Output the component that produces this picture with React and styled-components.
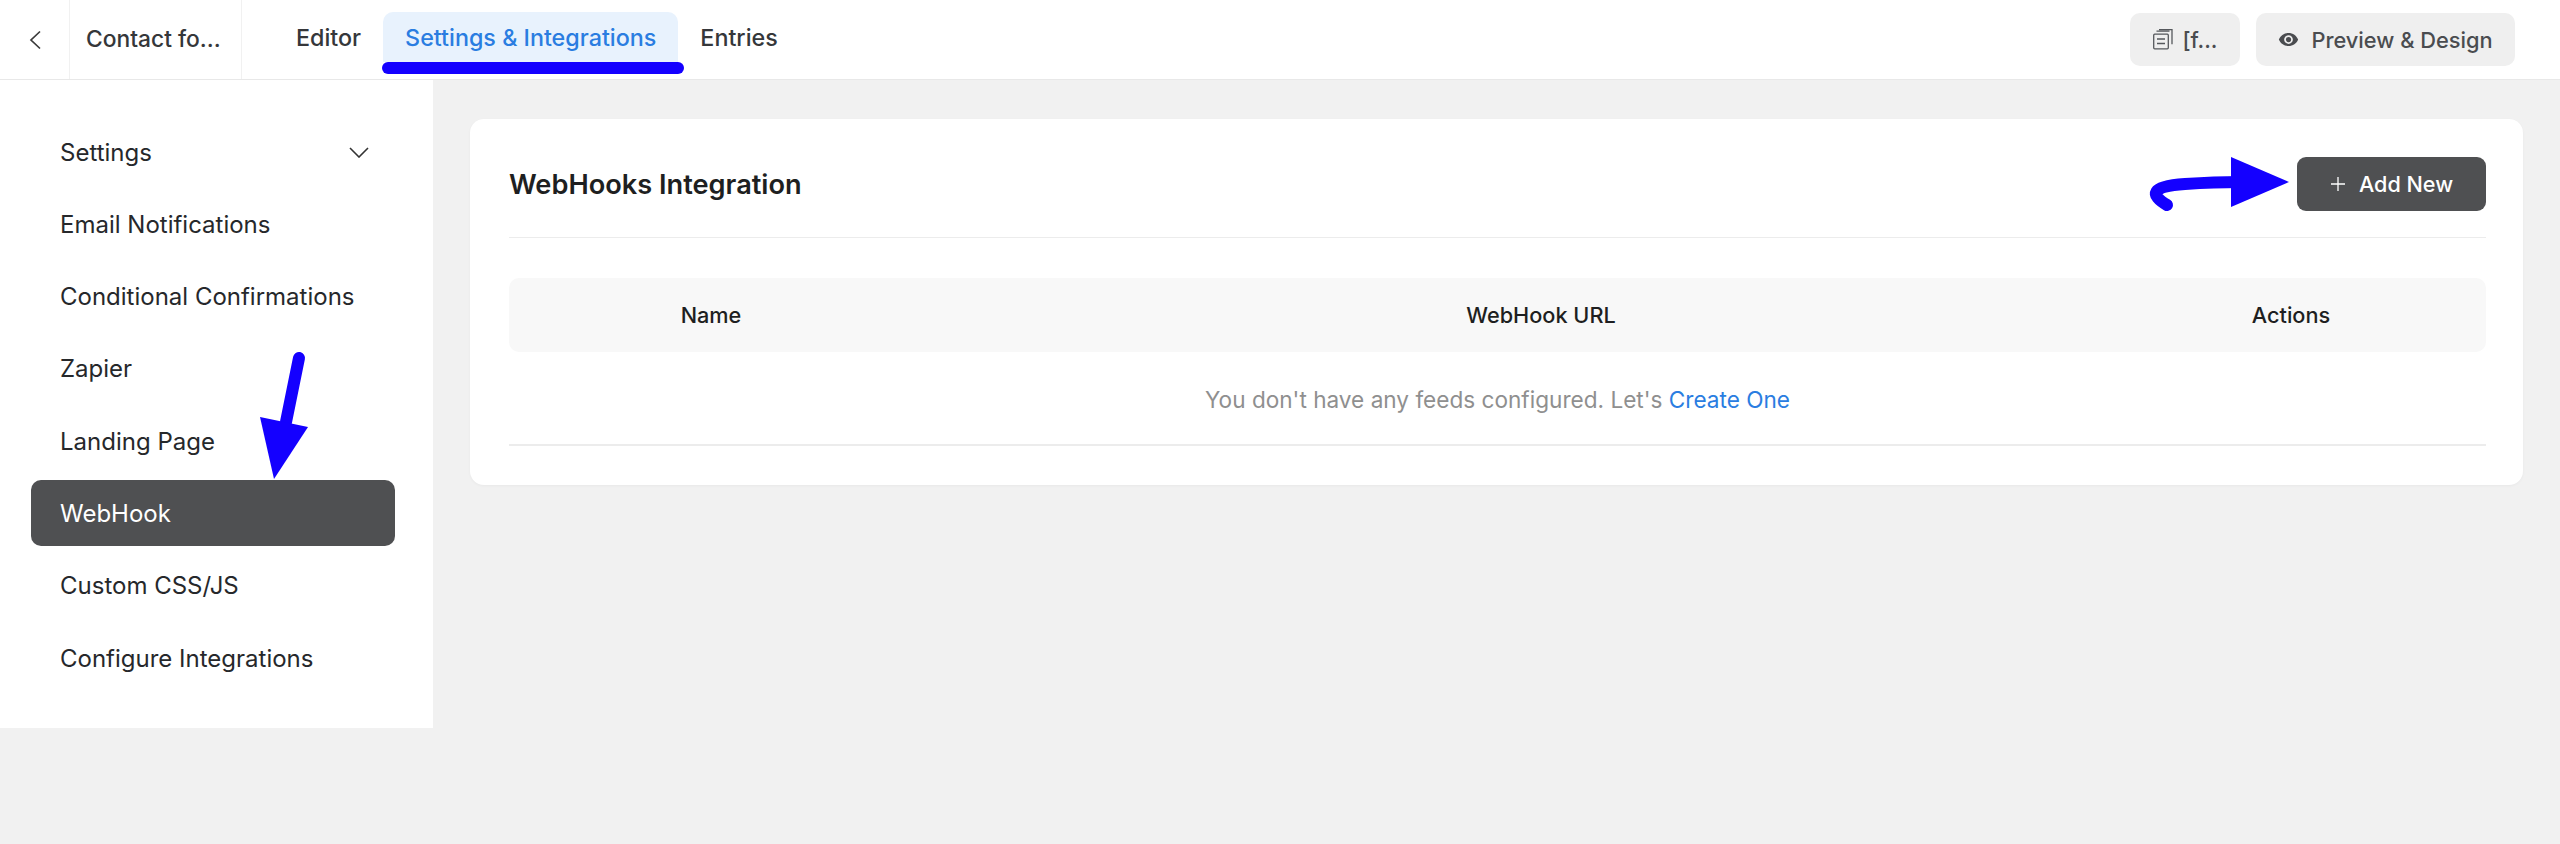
import React from "react";
import styled, { createGlobalStyle } from "styled-components";

const menuItems = [
  "Email Notifications",
  "Conditional Confirmations",
  "Zapier",
  "Landing Page",
  "WebHook",
  "Custom CSS/JS",
  "Configure Integrations",
];

export default function App() {
  return (
    <Page>
      <GlobalStyle />
      <Header>
        <BackCell>
          <svg width="14" height="20" viewBox="0 0 14 20" fill="none">
            <path d="M12 1.500 3 10l9 8.500" stroke="#3a3a3a" strokeWidth="1.7" />
          </svg>
        </BackCell>
        <TitleCell>Contact fo...</TitleCell>
        <Tabs>
          <Tab>Editor</Tab>
          <Tab $active>Settings &amp; Integrations</Tab>
          <Tab>Entries</Tab>
        </Tabs>
        <HeaderActions>
          <GreyButton $wide={false}>
            <svg width="20" height="21" viewBox="0 0 20 21" fill="none" stroke="#55585c" strokeWidth="1.3">
              <rect x="0.7" y="5.2" width="14.6" height="14.6" rx="1" />
              <path d="M3.5 2.2h13M6 .7h13v14.6M4 10h8M4 14.5h8" />
            </svg>
            [f...
          </GreyButton>
          <GreyButton $wide>
            <svg width="21" height="21" viewBox="0 0 24 24" fill="#4a4c4f">
              <path d="M12 4.5C7 4.5 2.7 7.6 1 12c1.7 4.4 6 7.500 11 7.500s9.300-3.100 11-7.500c-1.700-4.400-6-7.500-11-7.500zm0 12.500a5 5 0 1 1 0-10 5 5 0 0 1 0 10zm0-8a3 3 0 1 0 0 6 3 3 0 0 0 0-6z" />
            </svg>
            Preview &amp; Design
          </GreyButton>
        </HeaderActions>
      </Header>

      <Main>
        <Sidebar>
          <SettingsRow>
            Settings
            <svg width="20" height="11" viewBox="0 0 20 11" fill="none">
              <path d="M1 1l9 9 9-9" stroke="#333" strokeWidth="1.6" />
            </svg>
          </SettingsRow>
          {menuItems.map((item) => (
            <MenuItem key={item} $active={item === "WebHook"}>
              {item}
            </MenuItem>
          ))}
        </Sidebar>

        <Content>
          <Card>
            <CardHeader>
              <CardTitle>WebHooks Integration</CardTitle>
              <AddButton>
                <svg width="16" height="16" viewBox="0 0 16 16" fill="none">
                  <path d="M8 1v14M1 8h14" stroke="#fff" strokeWidth="1.3" />
                </svg>
                Add New
              </AddButton>
            </CardHeader>
            <TableHead>
              <span>Name</span>
              <span>WebHook URL</span>
              <span>Actions</span>
            </TableHead>
            <EmptyRow>
              You don't have any feeds configured. Let's <CreateLink>Create One</CreateLink>
            </EmptyRow>
          </Card>
        </Content>
      </Main>

      <Annotation viewBox="0 0 2560 844">
        <path d="M2167 205C2150 195 2150 186 2185 184C2200 183 2220 182 2240 182" fill="none" stroke="#1400ff" strokeWidth="12" strokeLinecap="round" />
        <polygon points="2231,157 2289,182 2231,207" fill="#1400ff" />
        <path d="M299 358L286 422" fill="none" stroke="#1400ff" strokeWidth="12" strokeLinecap="round" />
        <polygon points="260,417 308,427 274,479" fill="#1400ff" />
      </Annotation>
    </Page>
  );
}

const GlobalStyle = createGlobalStyle`
  html, body {
    margin: 0;
    padding: 0;
    background: #f1f1f1;
  }
  body {
    font-family: Inter, "Liberation Sans", sans-serif;
    color: #1e1f21;
  }
`;

const Page = styled.div`
  position: relative;
  height: 844px;
  overflow: hidden;
`;

const Header = styled.header`
  display: flex;
  align-items: stretch;
  height: 79px;
  background: #fff;
  border-bottom: 1px solid #e8e8e8;
`;

const BackCell = styled.div`
  width: 70px;
  display: flex;
  align-items: center;
  justify-content: center;
  border-right: 1px solid #f1f1f1;
  box-sizing: border-box;
`;

const TitleCell = styled.div`
  width: 172px;
  box-sizing: border-box;
  padding: 0 0 2px 16px;
  display: flex;
  align-items: center;
  font-size: 22.800px;
  font-weight: 500;
  color: #35373a;
  border-right: 1px solid #f1f1f1;
`;

const Tabs = styled.nav`
  display: flex;
  margin-left: 32px;
`;

const Tab = styled.div`
  position: relative;
  align-self: flex-start;
  margin-top: 12px;
  height: 50px;
  padding: 0 22px;
  display: flex;
  align-items: center;
  border-radius: 10px 10px 0 0;
  font-size: 23.300px;
  font-weight: 500;
  color: ${(p) => (p.$active ? "#2a7de1" : "#35373a")};
  background: ${(p) => (p.$active ? "#e8f2fd" : "transparent")};

  ${(p) =>
    p.$active &&
    `
    &::after {
      content: "";
      position: absolute;
      left: -1px;
      right: -6px;
      top: 50px;
      height: 12px;
      border-radius: 6px;
      background: #1400ff;
    }
  `}
`;

const HeaderActions = styled.div`
  margin-left: auto;
  margin-right: 45px;
  display: flex;
  align-items: center;
  gap: 16px;
`;

const GreyButton = styled.button`
  display: flex;
  align-items: center;
  gap: ${(p) => (p.$wide ? "12px" : "10px")};
  height: 53px;
  width: ${(p) => (p.$wide ? "259px" : "110px")};
  justify-content: center;
  border: 0;
  border-radius: 10px;
  background: #efefef;
  color: #4a4c4f;
  font-family: inherit;
  font-size: 21.800px;
  font-weight: 500;
`;

const Main = styled.div`
  display: flex;
  align-items: flex-start;
`;

const Sidebar = styled.aside`
  width: 433px;
  height: 648px;
  box-sizing: border-box;
  background: #fff;
  padding: 39px 38px 0 31px;
  display: flex;
  flex-direction: column;
  gap: 6.3px;
`;

const MenuItem = styled.div`
  height: 66px;
  flex: none;
  display: flex;
  align-items: center;
  padding-left: 29px;
  border-radius: 10px;
  font-size: 24px;
  color: ${(p) => (p.$active ? "#fff" : "#26282b")};
  background: ${(p) => (p.$active ? "#4f5052" : "transparent")};
`;

const SettingsRow = styled(MenuItem)`
  justify-content: space-between;
  padding-right: 26px;
`;

const Content = styled.main`
  flex: 1;
  padding: 39px 37px 0;
`;

const Card = styled.section`
  height: 366px;
  box-sizing: border-box;
  background: #fff;
  border-radius: 14px;
  box-shadow: 0 1px 3px rgba(0, 0, 0, 0.04);
  padding: 0 37px 0 39px;
  display: flex;
  flex-direction: column;
`;

const CardHeader = styled.div`
  height: 119px;
  box-sizing: border-box;
  padding-top: 13px;
  flex: none;
  display: flex;
  align-items: center;
  justify-content: space-between;
  border-bottom: 1px solid #ececec;
`;

const CardTitle = styled.h2`
  margin: 0;
  font-size: 27.200px;
  font-weight: 600;
  color: #1e1f21;
`;

const AddButton = styled.button`
  width: 189px;
  height: 54px;
  margin-bottom: 2px;
  display: flex;
  align-items: center;
  justify-content: center;
  gap: 13px;
  border: 0;
  border-radius: 9px;
  background: #4f5052;
  color: #fff;
  font-family: inherit;
  font-size: 21.600px;
  font-weight: 500;
`;

const TableHead = styled.div`
  margin-top: 40px;
  height: 74px;
  flex: none;
  display: grid;
  grid-template-columns: 404px 1256px 244px;
  align-items: center;
  justify-items: center;
  border-radius: 10px;
  background: #f8f8f8;
  font-size: 21.700px;
  font-weight: 500;
  color: #1e1f21;
`;

const EmptyRow = styled.div`
  height: 94px;
  box-sizing: border-box;
  padding-top: 2px;
  flex: none;
  display: flex;
  align-items: center;
  justify-content: center;
  gap: 0.28em;
  border-bottom: 2px solid #ececec;
  font-size: 22.600px;
  color: #8f8f8f;
`;

const CreateLink = styled.a`
  color: #2a7de1;
`;

const Annotation = styled.svg`
  position: absolute;
  left: 0;
  top: 0;
  width: 2560px;
  height: 844px;
  pointer-events: none;
`;
